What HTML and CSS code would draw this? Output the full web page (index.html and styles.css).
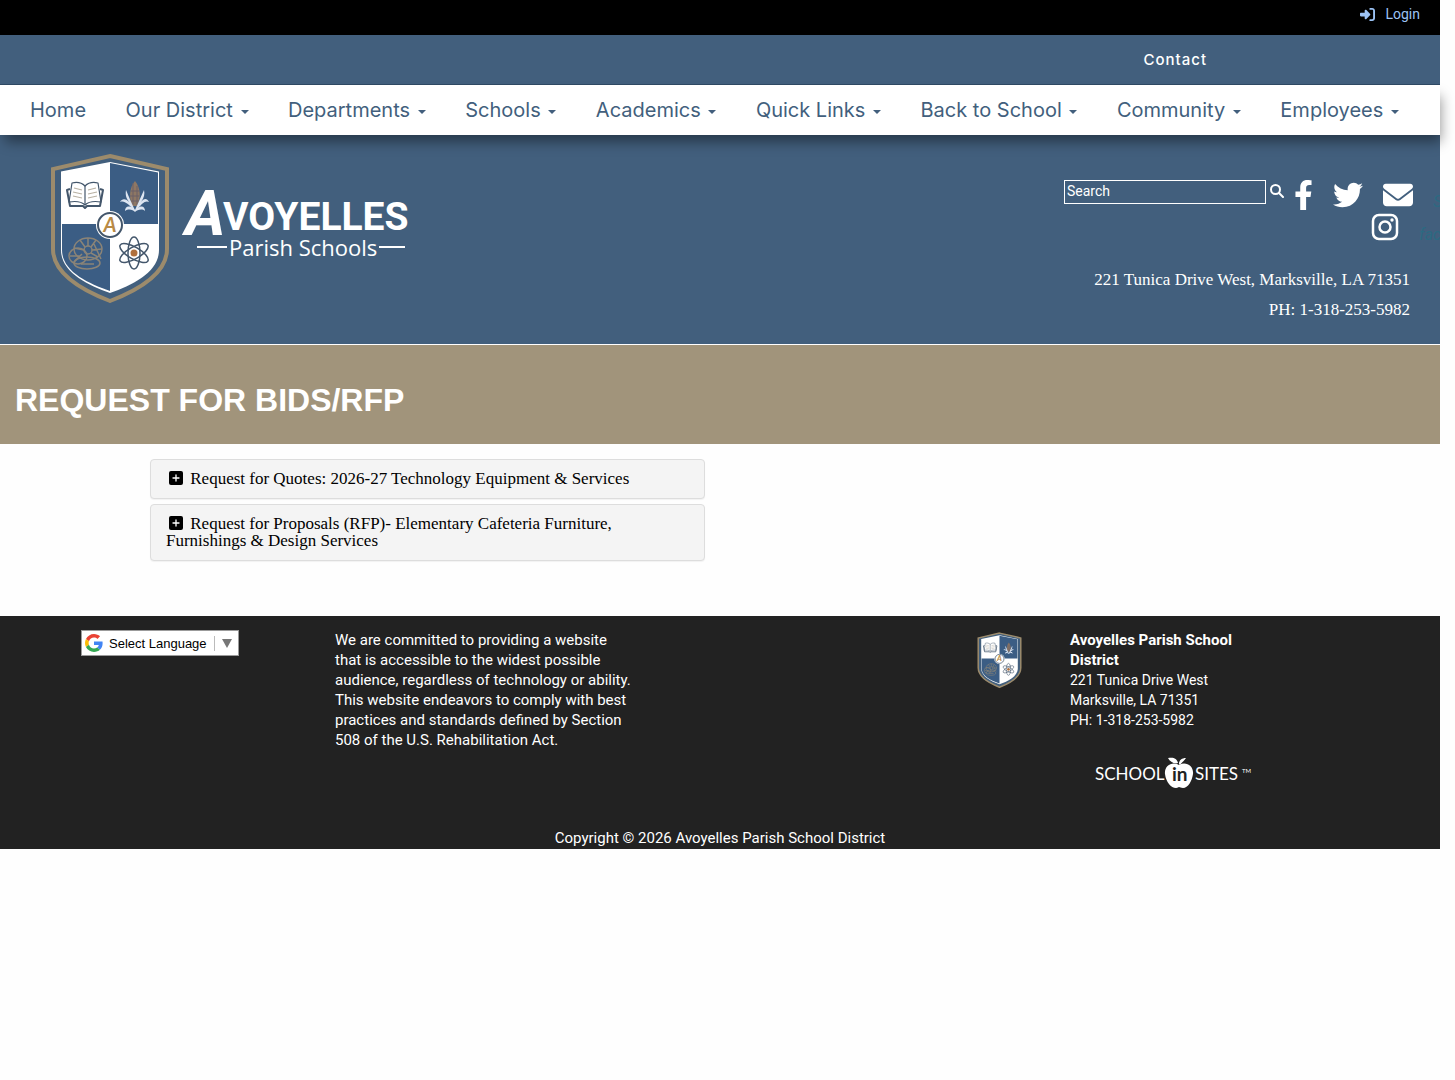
FILE: index.html
```html
<!DOCTYPE html>
<html lang="en">
<head>
  <meta charset="UTF-8" />
  <meta name="viewport" content="width=device-width, initial-scale=1.0" />
  <title>Request for Bids/RFP - Avoyelles Parish School District</title>
  <link rel="stylesheet" href="styles.css">
</head>
<body>
  <!-- shared artwork -->
  <svg class="sprite" aria-hidden="true">
    <symbol id="crest" viewBox="0 0 120 150">
      <path d="M60 3 L117 16 V96 C117 122 86 138 60 148 C34 138 3 122 3 96 V16 Z" fill="#425f7d" stroke="#9c8b6c" stroke-width="4"/>
      <path d="M60 9 L109 18.500 V97 C109 119 83 132 60 140 C37 132 11 119 11 97 V18.500 Z" fill="#fff"/>
      <path d="M60 10 L108 19.500 V71 H60 Z" fill="#3b5d84"/>
      <path d="M12 71 H60 V138 C37 130 12 118 12 97 Z" fill="#3b5d84"/>
      <!-- book -->
      <g stroke="#43566b" stroke-width="1.200" fill="none" stroke-linejoin="round">
        <path d="M35 33 C31 29 26 29 22 30 L19 49 C25 48 31 48 35 52 C39 48 45 48 51 49 L48 30 C44 29 39 29 35 33 Z" fill="#fff"/>
        <path d="M35 33 V52"/>
        <path d="M20 36 L17 37 L20 53 L33 53 L35 55 L37 53 L50 53 L53 37 L50 36" stroke-width="2"/>
        <path d="M24 35 L32 37 M23 39 L32 41 M23 43 L32 45 M46 35 L38 37 M47 39 L38 41 M47 43 L38 45" stroke="#b9b2a4"/>
      </g>
      <!-- corn -->
      <path d="M85 28 C91 35 91 46 87 53 H82 C79 45 79 35 85 28 Z" fill="#8e7763"/>
      <path d="M83 30 V52 M87 33 V52 M81 38 H89 M80 43 H89 M81 48 H89" stroke="#6b6168" stroke-width="1"/>
      <path d="M85 57 C81 49 79 44 76 37 C75 43 77 46 79 49 C75 45 72 46 70 49 C75 47 78 52 83 55 C78 52 75 54 75 58 C79 55 83 57 85 59 C87 57 92 55 95 58 C95 54 92 52 88 55 C92 51 95 47 99 49 C97 45 94 45 91 49 C94 45 95 41 94 37 C91 44 88 50 85 57 Z" fill="#dde5f1"/>
      <!-- shell -->
      <g fill="none" stroke="#8b8477" stroke-width="1.500">
        <ellipse cx="38" cy="96" rx="14" ry="11"/>
        <ellipse cx="28" cy="103" rx="9" ry="8"/>
        <ellipse cx="37" cy="110" rx="13" ry="6"/>
        <circle cx="38" cy="97" r="4"/>
        <path d="M38 85 V93 M30 87 L35 94 M46 87 L41 94 M24 95 L34 97 M52 96 L42 97 M48 104 L41 100 M20 103 H30 M24 109 L32 101 M31 111 H44 M44 91 L51 106"/>
      </g>
      <!-- atom -->
      <g fill="none" stroke="#43566b" stroke-width="1.500">
        <ellipse cx="84" cy="100" rx="6" ry="16"/>
        <ellipse cx="84" cy="100" rx="6" ry="16" transform="rotate(60 84 100)"/>
        <ellipse cx="84" cy="100" rx="6" ry="16" transform="rotate(120 84 100)"/>
      </g>
      <circle cx="84" cy="100" r="3.500" fill="#b0703d"/>
      <circle cx="60" cy="72" r="14" fill="#fff"/>
      <circle cx="60" cy="72" r="12" fill="#fff" stroke="#43566b" stroke-width="2"/>
      <text class="crest-letter" x="60" y="79" text-anchor="middle">A</text>
    </symbol>
    <symbol id="plus-square" viewBox="0 0 14 14">
      <rect width="14" height="14" rx="2" fill="#000"/>
      <path d="M7 4 V10 M4 7 H10" stroke="#fff" stroke-width="1.300" stroke-linecap="round"/>
    </symbol>
  </svg>

  <div class="login-bar">
    <a href="#" class="login-link">
      <svg width="15" height="15" viewBox="0 0 512 512" aria-hidden="true"><path fill="currentColor" d="M217.900 105.900 340.700 228.700c7.200 7.200 11.300 17.100 11.300 27.300s-4.100 20.100-11.300 27.300L217.900 406.100c-6.400 6.400-15 9.900-24 9.900-18.700 0-33.900-15.200-33.900-33.900V320H32c-17.700 0-32-14.300-32-32v-64c0-17.700 14.300-32 32-32h128v-62.100c0-18.700 15.200-33.900 33.900-33.900 9 0 17.600 3.600 24 9.900zM352 416h64c17.700 0 32-14.300 32-32V128c0-17.700-14.300-32-32-32h-64c-17.700 0-32-14.300-32-32s14.300-32 32-32h64c53 0 96 43 96 96v256c0 53-43 96-96 96h-64c-17.700 0-32-14.300-32-32s14.300-32 32-32z"/></svg>
      Login
    </a>
  </div>

  <div class="top-bar">
    <a href="#">Contact</a>
  </div>

  <nav class="main-nav">
    <ul>
      <li><a href="#">Home</a></li>
      <li><a href="#">Our District <span class="caret"></span></a></li>
      <li><a href="#">Departments <span class="caret"></span></a></li>
      <li><a href="#">Schools <span class="caret"></span></a></li>
      <li><a href="#">Academics <span class="caret"></span></a></li>
      <li><a href="#">Quick Links <span class="caret"></span></a></li>
      <li><a href="#">Back to School <span class="caret"></span></a></li>
      <li><a href="#">Community <span class="caret"></span></a></li>
      <li><a href="#">Employees <span class="caret"></span></a></li>
    </ul>
  </nav>

  <header class="site-header">
    <a href="#" class="logo" aria-label="Avoyelles Parish Schools">
      <svg width="120" height="150"><use href="#crest"/></svg>
      <svg class="wordmark" width="230" height="80" viewBox="0 0 230 80">
        <text class="wordmark-a" x="3" y="50">A</text>
        <text class="wordmark-name" x="41" y="45">VOYELLES</text>
        <text class="wordmark-sub" x="47" y="71">Parish Schools</text>
        <path d="M15 62 H45 M197 62 H223" stroke="#fff" stroke-width="2"/>
      </svg>
    </a>

    <div class="header-side">
      <div class="header-tools">
        <form class="search">
          <input type="text" aria-label="Search" placeholder="Search">
          <button type="submit" aria-label="Submit search">
            <svg width="14" height="14" viewBox="0 0 14 14"><circle cx="5.500" cy="5.500" r="4.500" fill="none" stroke="#fff" stroke-width="2"/><path d="M9 9 L13 13" stroke="#fff" stroke-width="2" stroke-linecap="round"/></svg>
          </button>
        </form>
        <div class="social">
          <div class="social-row">
            <a href="#" aria-label="Facebook"><svg width="19" height="30" viewBox="0 0 320 512"><path fill="#fff" d="m279.140 288 14.220-92.660h-88.910v-60.130c0-25.350 12.420-50.060 52.240-50.060h40.420V6.260S260.430 0 225.360 0c-73.220 0-121.080 44.380-121.080 124.720v70.620H22.890V288h81.390v224h100.170V288z"/></svg></a>
            <a href="#" aria-label="Twitter"><svg width="30" height="30" viewBox="0 0 512 512"><path fill="#fff" d="M459.370 151.716c.325 4.548.325 9.097.325 13.645 0 138.720-105.583 298.558-298.558 298.558-59.452 0-114.680-17.219-161.137-47.106 8.447.974 16.568 1.299 25.340 1.299 49.055 0 94.213-16.568 130.274-44.832-46.132-.975-84.792-31.188-98.112-72.772 6.498.974 12.995 1.624 19.818 1.624 9.421 0 18.843-1.300 27.614-3.573-48.081-9.747-84.143-51.980-84.143-102.985v-1.299c13.969 7.797 30.214 12.670 47.431 13.319-28.264-18.843-46.781-51.005-46.781-87.391 0-19.492 5.197-37.360 14.294-52.954 51.655 63.675 129.300 105.258 216.365 109.807-1.624-7.797-2.599-15.918-2.599-24.040 0-57.828 46.782-104.934 104.934-104.934 30.213 0 57.502 12.670 76.670 33.137 23.715-4.548 46.456-13.320 66.599-25.340-7.798 24.366-24.366 44.833-46.132 57.827 21.117-2.273 41.584-8.122 60.426-16.243-14.292 20.791-32.161 39.308-52.628 54.253z"/></svg></a>
            <a href="#" aria-label="Email"><svg width="30" height="30" viewBox="0 0 512 512"><path fill="#fff" d="M48 64C21.500 64 0 85.500 0 112c0 15.100 7.100 29.300 19.200 38.400l217.600 163.200c11.400 8.500 27 8.500 38.400 0l217.600-163.200c12.100-9.100 19.200-23.300 19.200-38.400 0-26.500-21.500-48-48-48H48zM0 176v208c0 35.300 28.700 64 64 64h384c35.300 0 64-28.700 64-64V176L294.400 339.200c-22.800 17.100-54 17.100-76.800 0L0 176z"/></svg></a>
            <a href="#" class="clipped">Social</a>
          </div>
          <div class="social-row">
            <a href="#" aria-label="Instagram"><svg width="28" height="28" viewBox="0 0 28 28"><rect x="2" y="2" width="24" height="24" rx="6" fill="none" stroke="#fff" stroke-width="2.500"/><circle cx="14" cy="14" r="5.500" fill="none" stroke="#fff" stroke-width="2.500"/><circle cx="21" cy="7" r="1.700" fill="#fff"/></svg></a>
            <a href="#" class="clipped">facebook</a>
          </div>
        </div>
      </div>
      <p>221 Tunica Drive West, Marksville, LA 71351</p>
      <p>PH: 1-318-253-5982</p>
    </div>
  </header>

  <div class="page-title">
    <h1>REQUEST FOR BIDS/RFP</h1>
  </div>

  <main class="container">
    <div class="panel-group">
      <h2 class="panel"><a href="#"><svg width="14" height="14" aria-hidden="true"><use href="#plus-square"/></svg> Request for Quotes: 2026-27 Technology Equipment &amp; Services</a></h2>
      <h2 class="panel"><a href="#"><svg width="14" height="14" aria-hidden="true"><use href="#plus-square"/></svg> Request for Proposals (RFP)- Elementary Cafeteria Furniture, Furnishings &amp; Design Services</a></h2>
    </div>
  </main>

  <footer>
    <div class="footer-grid">
      <div>
        <button type="button" class="translate">
          <svg width="18" height="18" viewBox="0 0 48 48" aria-hidden="true"><path fill="#ea4335" d="M24 9.500c3.500 0 6.700 1.200 9.200 3.600l6.900-6.900C35.900 2.400 30.500 0 24 0 14.600 0 6.500 5.400 2.600 13.200l8 6.200C12.400 13.700 17.700 9.500 24 9.500z"/><path fill="#4285f4" d="M47 24.600c0-1.600-.200-3.100-.400-4.600H24v9h12.900c-.600 3-2.300 5.500-4.800 7.200l7.700 6C44.400 38 47 31.800 47 24.600z"/><path fill="#fbbc05" d="M10.500 28.600c-.500-1.500-.800-3-.800-4.600s.300-3.100.800-4.600l-8-6.200C.900 16.500 0 20.100 0 24s.900 7.500 2.600 10.800z"/><path fill="#34a853" d="M24 48c6.500 0 11.900-2.100 15.900-5.800l-7.700-6c-2.200 1.500-4.900 2.300-8.200 2.300-6.300 0-11.600-4.200-13.500-9.900l-8 6.200C6.500 42.600 14.600 48 24 48z"/></svg>
          <span>Select Language</span>
          <span class="arrow"></span>
        </button>
      </div>
      <p class="statement">
        We are committed to providing a website<br>
        that is accessible to the widest possible<br>
        audience, regardless of technology or ability.<br>
        This website endeavors to comply with best<br>
        practices and standards defined by Section<br>
        508 of the U.S. Rehabilitation Act.
      </p>
      <svg class="footer-crest" width="45" height="56"><use href="#crest"/></svg>
      <div>
        <address>
          <strong>Avoyelles Parish School District</strong><br>
          221 Tunica Drive West<br>
          Marksville, LA 71351<br>
          PH: 1-318-253-5982
        </address>
        <a href="#" class="vendor" aria-label="School in Sites">
          <svg width="158" height="32" viewBox="0 0 158 32">
            <text class="vendor-text" x="0" y="23">SCHOOL</text>
            <path fill="#fff" d="M84 8 C77 4 69 9 70 17 C71 25 76 31 81 31 C83 31 83 30 84 30 C85 30 86 31 88 31 C93 31 97 24 98 17 C99 9 91 4 84 8 Z"/>
            <path fill="#fff" d="M84 7 C84 3 87 1 91 1 C89 4 87 5 85 8 Z M83 6 C79 7 75 5 73 1 C78 0 82 1 83 6 Z"/>
            <text class="vendor-in" x="77" y="24">in</text>
            <text class="vendor-text" x="100" y="23">SITES</text>
            <text class="vendor-tm" x="147" y="16">TM</text>
          </svg>
        </a>
      </div>
    </div>
    <p class="copyright">Copyright © 2026 Avoyelles Parish School District</p>
  </footer>
</body>
</html>
```
FILE: styles.css
```css
* {
  box-sizing: border-box;
}
body {
  font-family: Roboto, 'Liberation Sans', sans-serif;
  font-size: 14px;
  line-height: 20px;
  margin: 0;
  padding-right: 15px;
  background-color: #fefefe;
  color: #000;
  overflow-x: hidden;
}
a {
  color: inherit;
  text-decoration: none;
}
p {
  margin: 0;
}
.sprite {
  display: none;
}
.crest-letter {
  font: italic bold 20px Lato, sans-serif;
  fill: #b98a45;
}

/* top bars */
.login-bar {
  background-color: #000;
  height: 35px;
  padding: 4px 20px;
  text-align: right;
}
.login-link {
  display: inline-flex;
  align-items: center;
  gap: 10px;
  color: #9cc3f5;
}
.top-bar {
  background-color: #425f7d;
  border-bottom: 1px solid #2f4964;
  height: 50px;
  padding: 15px 233px 0 0;
  text-align: right;
  color: #fff;
  font-family: Inter, sans-serif;
  font-size: 15px;
  font-weight: 500;
  letter-spacing: 1px;
}
.main-nav {
  position: relative;
  height: 50px;
  background-color: #fff;
  box-shadow: 3px 9px 12px -2px rgba(0, 0, 0, 0.4);
}
.main-nav ul {
  display: flex;
  justify-content: space-between;
  list-style: none;
  margin: 0;
  padding: 0 41px 0 30px;
}
.main-nav a {
  display: block;
  font-family: Inter, sans-serif;
  font-size: 20px;
  line-height: 51px;
  color: #425f7d;
  white-space: nowrap;
}
.caret {
  display: inline-block;
  vertical-align: middle;
  margin-left: 2px;
  border-top: 4px solid;
  border-left: 4px solid transparent;
  border-right: 4px solid transparent;
}

/* header */
.site-header {
  display: flex;
  justify-content: space-between;
  background-color: #425f7d;
  border-bottom: 1px solid #fff;
  height: 210px;
  padding: 18px 0 0 50px;
  color: #fff;
  overflow: hidden;
}
.logo {
  display: flex;
  gap: 12px;
}
.wordmark {
  margin-top: 32px;
  overflow: visible;
}
.wordmark text {
  fill: #fff;
}
.wordmark-a {
  font: italic bold 62px Roboto, sans-serif;
}
.wordmark-name {
  font: bold 39px Roboto, sans-serif;
}
.wordmark-sub {
  font: 22px 'Open Sans', sans-serif;
}
.header-side {
  padding-top: 27px;
  text-align: right;
}
.header-side p {
  padding-right: 30px;
  font-family: Georgia, 'Liberation Serif', serif;
  font-size: 17px;
  line-height: 30px;
}
.header-tools {
  display: flex;
  justify-content: flex-end;
  gap: 10px;
  height: 85px;
}
.search {
  display: flex;
  align-items: flex-start;
  gap: 4px;
}
.search input {
  width: 202px;
  height: 24px;
  padding: 0 2px 2px;
  border: 1px solid #fff;
  border-radius: 0;
  background: transparent;
  color: #fff;
  font: 14px Roboto, sans-serif;
}
.search input::placeholder {
  color: #fff;
}
.search button {
  padding: 4px 0;
  border: 0;
  background: none;
  line-height: 0;
}
.social {
  width: 146px;
  overflow: hidden;
}
.social-row {
  display: flex;
  align-items: flex-start;
  gap: 20px;
  height: 33px;
}
.social-row + .social-row {
  padding-left: 77px;
}
.social svg {
  display: block;
}
.clipped {
  color: #2c6a82;
  font-size: 16px;
  font-style: italic;
  padding-top: 12px;
}

/* page title */
.page-title {
  background-color: #a1947b;
  padding: 35px 15px 24px;
}
h1 {
  margin: 0;
  color: #fff;
  font: bold 32px/40px 'Liberation Sans', Arial, sans-serif;
}

/* content */
.container {
  max-width: 1170px;
  margin: 0 auto;
  padding: 15px 15px 55px;
}
.panel-group {
  display: flex;
  flex-direction: column;
  gap: 5px;
  width: 50%;
  padding-right: 15px;
}
.panel {
  margin: 0;
  padding: 10px 15px 11px;
  background-color: #f4f4f4;
  border: 1px solid #ddd;
  border-radius: 4px;
  box-shadow: 0 1px 1px rgba(0, 0, 0, 0.05);
  font: 17px/17px Georgia, 'Liberation Serif', serif;
}
.panel svg {
  margin: 0 3px;
  vertical-align: -1px;
}

/* footer */
footer {
  background-color: #222;
  color: #fff;
}
.footer-grid {
  display: grid;
  grid-template-columns: 254px 300px 1fr 170px;
  padding: 14px 200px 0 81px;
}
.translate {
  display: flex;
  align-items: center;
  gap: 6px;
  height: 26px;
  padding: 0 6px 0 3px;
  border: 1px solid #9b9b9b;
  background-color: #fff;
  color: #000;
  font: 13px 'Liberation Sans', Arial, sans-serif;
}
.translate .arrow {
  display: flex;
  margin-left: 1px;
  padding: 3px 0 3px 7px;
  border-left: 1px solid #bbb;
}
.translate .arrow::before {
  content: '';
  border-top: 9px solid #767676;
  border-left: 5px solid transparent;
  border-right: 5px solid transparent;
}
.statement,
.copyright,
address strong {
  font-size: 15px;
}
.footer-crest {
  justify-self: end;
  margin: 2px 48px 0 0;
}
address {
  font-style: normal;
}
.vendor {
  display: block;
  margin: 27px 0 0 25px;
}
.vendor svg {
  display: block;
  overflow: visible;
}
.vendor-text {
  font: 17px Lato, sans-serif;
  fill: #fff;
}
.vendor-in {
  font: bold 19px Lato, sans-serif;
  fill: #222;
}
.vendor-tm {
  font: 6px Lato, sans-serif;
  fill: #fff;
}
.copyright {
  padding: 39px 0 1px;
  text-align: center;
}
```
